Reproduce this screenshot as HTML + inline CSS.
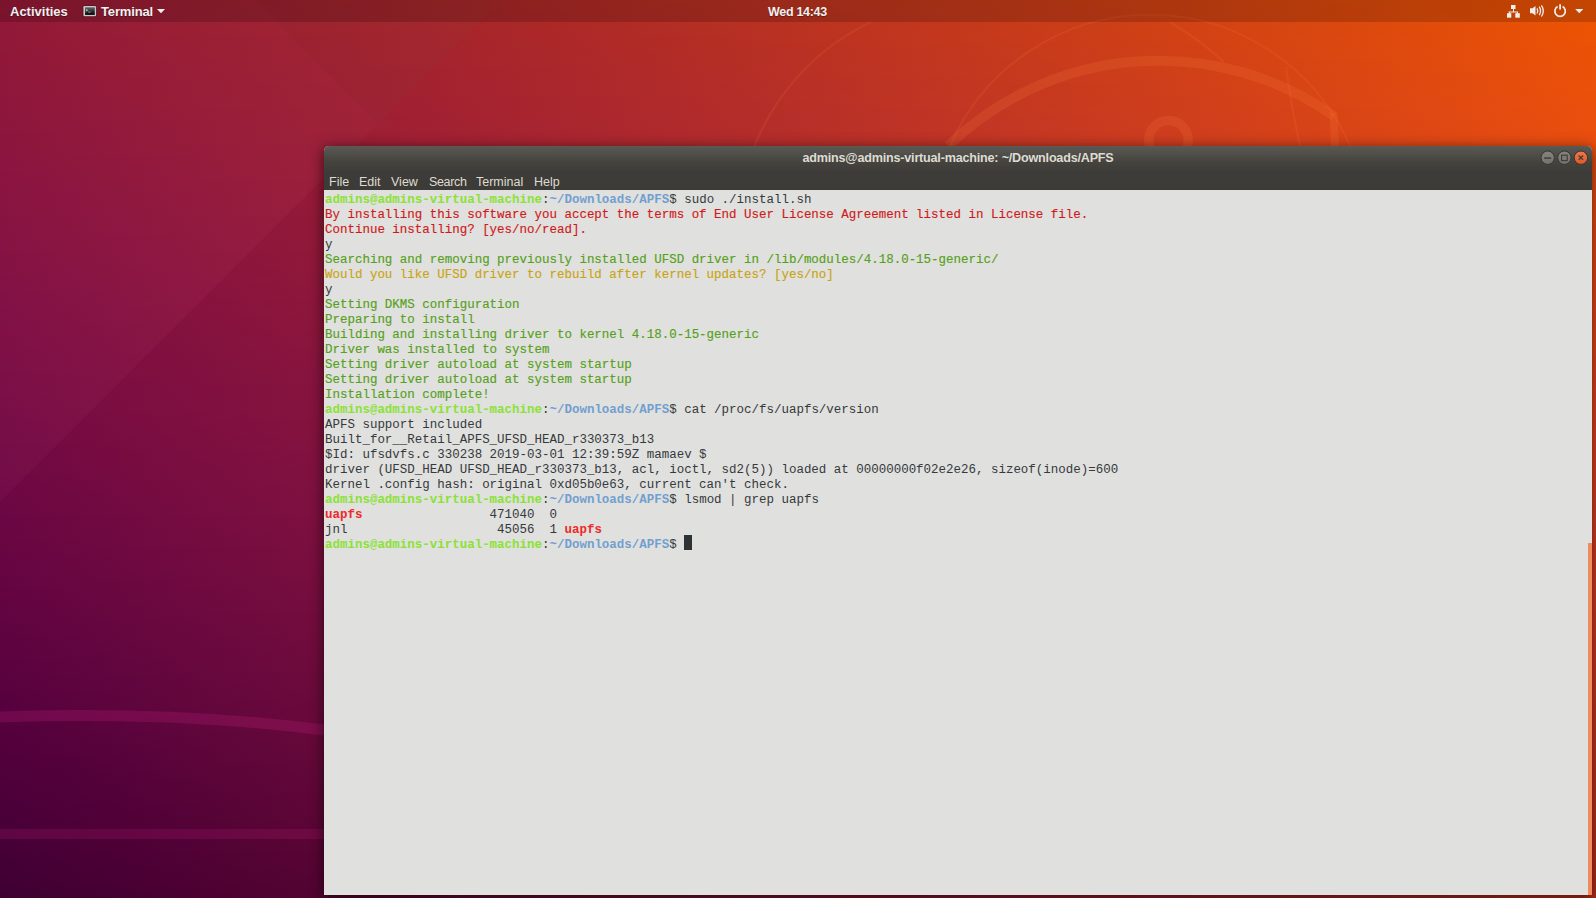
<!DOCTYPE html>
<html><head><meta charset="utf-8">
<style>
html,body{margin:0;padding:0;width:1596px;height:898px;overflow:hidden;}
body{position:relative;font-family:"Liberation Sans",sans-serif;background:#7a0a4a;}
#wall{position:absolute;left:0;top:0;width:1596px;height:898px;overflow:hidden;}
#wall div{position:absolute;left:0;width:1596px;height:6px;}
#deco{position:absolute;left:0;top:0;}
#topbar{position:absolute;left:0;top:0;width:1596px;height:22px;background:rgba(0,0,0,0.17);color:#f0f0f0;font-size:13px;font-weight:bold;}
#topbar .t{position:absolute;top:4px;white-space:nowrap;line-height:16px;text-shadow:0 1px 1px rgba(0,0,0,0.35);}
#ticons{position:absolute;left:0;top:0;}
#shadow{position:absolute;left:324px;top:146px;width:1268px;height:749px;border-radius:5px 5px 0 0;box-shadow:0 3px 14px 1px rgba(0,0,0,0.55);}
#win{position:absolute;left:324px;top:146px;width:1268px;height:749px;border-radius:5px 5px 0 0;overflow:hidden;background:#e0e0df;}
#title{position:absolute;left:0;top:0;width:1268px;height:44px;background:linear-gradient(#5a5953 0px,#4f4e49 8px,#44433e 16px,#3d3c38 26px,#3c3b37 44px);}
#title .tt{position:absolute;left:0;width:1268px;top:4px;line-height:16px;text-align:center;color:#dfdbd2;font-size:12.6px;font-weight:bold;letter-spacing:-0.2px;}
#menu{position:absolute;left:0;top:24px;height:20px;width:1268px;color:#dfdbd2;font-size:12.5px;}
#menu span{position:absolute;top:4px;line-height:16px;white-space:nowrap;}
#term{position:absolute;left:0;top:44px;width:1268px;height:705px;background:#e0e0df;}
pre{margin:0;position:absolute;left:1px;top:3px;font-family:"Liberation Mono",monospace;font-size:12.47px;line-height:15px;color:#35393b;}
.g{color:#8ae234;font-weight:bold}.b{color:#729fcf;font-weight:bold}.r{color:#d01a1a;-webkit-text-stroke:0.15px}.gr{color:#56a01a;-webkit-text-stroke:0.15px}.y{color:#c9a412;-webkit-text-stroke:0.15px}.br{color:#ef2929;font-weight:bold}
.cur{background:#2e3436;color:#e0e0df}
#sb{position:absolute;left:1264px;top:353px;width:5px;height:352px;background:#ee8c60;}
</style></head><body>
<div id="wall">
<div style="top:0px;background:linear-gradient(90deg,#901531 0px,#97192f 133px,#9e1e2c 266px,#a52329 399px,#ac2826 532px,#b32e23 665px,#bb331f 798px,#c2381a 931px,#ca3e16 1064px,#d24311 1197px,#db490c 1330px,#e34e07 1463px,#ec5401 1596px)"></div>
<div style="top:6px;background:linear-gradient(90deg,#901532 0px,#971930 133px,#9d1e2d 266px,#a4232a 399px,#ac2827 532px,#b32d23 665px,#ba331f 798px,#c2381b 931px,#ca3d17 1064px,#d24312 1197px,#db480d 1330px,#e34e07 1463px,#ec5402 1596px)"></div>
<div style="top:12px;background:linear-gradient(90deg,#901432 0px,#961930 133px,#9d1e2d 266px,#a4232a 399px,#ab2827 532px,#b32d24 665px,#ba3220 798px,#c2381c 931px,#ca3d17 1064px,#d24312 1197px,#db480d 1330px,#e34e08 1463px,#ec5402 1596px)"></div>
<div style="top:18px;background:linear-gradient(90deg,#901433 0px,#961931 133px,#9d1e2e 266px,#a4232b 399px,#ab2828 532px,#b32d24 665px,#ba3220 798px,#c2371c 931px,#ca3d18 1064px,#d24213 1197px,#db480e 1330px,#e34e09 1463px,#ec5303 1596px)"></div>
<div style="top:24px;background:linear-gradient(90deg,#8f1433 0px,#961931 133px,#9d1e2e 266px,#a4232b 399px,#ab2828 532px,#b22d25 665px,#ba3221 798px,#c2371d 931px,#ca3d18 1064px,#d24214 1197px,#da480f 1330px,#e34d09 1463px,#ec5304 1596px)"></div>
<div style="top:30px;background:linear-gradient(90deg,#8f1434 0px,#961931 133px,#9d1e2f 266px,#a4222c 399px,#ab2729 532px,#b22d25 665px,#ba3221 798px,#c2371d 931px,#ca3c19 1064px,#d24214 1197px,#da470f 1330px,#e34d0a 1463px,#ec5304 1596px)"></div>
<div style="top:36px;background:linear-gradient(90deg,#8f1434 0px,#951932 133px,#9c1d2f 266px,#a3222c 399px,#ab2729 532px,#b22c26 665px,#ba3222 798px,#c2371e 931px,#ca3c19 1064px,#d24215 1197px,#da4710 1330px,#e34d0b 1463px,#ec5305 1596px)"></div>
<div style="top:42px;background:linear-gradient(90deg,#8f1435 0px,#951832 133px,#9c1d30 266px,#a3222d 399px,#aa272a 532px,#b22c26 665px,#ba3122 798px,#c1371e 931px,#c93c1a 1064px,#d24115 1197px,#da4710 1330px,#e34d0b 1463px,#ec5206 1596px)"></div>
<div style="top:48px;background:linear-gradient(90deg,#8e1435 0px,#951833 133px,#9c1d30 266px,#a3222d 399px,#aa272a 532px,#b22c27 665px,#b93123 798px,#c1361f 931px,#c93c1b 1064px,#d24116 1197px,#da4711 1330px,#e34c0c 1463px,#ec5206 1596px)"></div>
<div style="top:54px;background:linear-gradient(90deg,#8e1336 0px,#951833 133px,#9c1d31 266px,#a3222e 399px,#aa272b 532px,#b12c27 665px,#b93124 798px,#c1361f 931px,#c93c1b 1064px,#d14116 1197px,#da4712 1330px,#e34c0c 1463px,#eb5207 1596px)"></div>
<div style="top:60px;background:linear-gradient(90deg,#8e1336 0px,#941834 133px,#9b1d31 266px,#a2222e 399px,#aa272b 532px,#b12c28 665px,#b93124 798px,#c13620 931px,#c93b1c 1064px,#d14117 1197px,#da4612 1330px,#e24c0d 1463px,#eb5207 1596px)"></div>
<div style="top:66px;background:linear-gradient(90deg,#8d1336 0px,#941834 133px,#9b1d32 266px,#a2212f 399px,#aa262c 532px,#b12b28 665px,#b93125 798px,#c13621 931px,#c93b1c 1064px,#d14118 1197px,#da4613 1330px,#e24c0d 1463px,#eb5108 1596px)"></div>
<div style="top:72px;background:linear-gradient(90deg,#8d1337 0px,#941835 133px,#9b1c32 266px,#a2212f 399px,#a9262c 532px,#b12b29 665px,#b93025 798px,#c13621 931px,#c93b1d 1064px,#d14018 1197px,#d94613 1330px,#e24b0e 1463px,#eb5108 1596px)"></div>
<div style="top:78px;background:linear-gradient(90deg,#8d1337 0px,#941735 133px,#9b1c33 266px,#a22130 399px,#a9262d 532px,#b12b29 665px,#b83026 798px,#c03522 931px,#c83b1d 1064px,#d14019 1197px,#d94614 1330px,#e24b0f 1463px,#eb5109 1596px)"></div>
<div style="top:84px;background:linear-gradient(90deg,#8d1338 0px,#931736 133px,#9a1c33 266px,#a22130 399px,#a9262d 532px,#b02b2a 665px,#b83026 798px,#c03522 931px,#c83a1e 1064px,#d14019 1197px,#d94514 1330px,#e24b0f 1463px,#eb510a 1596px)"></div>
<div style="top:90px;background:linear-gradient(90deg,#8c1338 0px,#931736 133px,#9a1c33 266px,#a12131 399px,#a9262e 532px,#b02b2a 665px,#b83027 798px,#c03523 931px,#c83a1e 1064px,#d0401a 1197px,#d94515 1330px,#e24b10 1463px,#eb500a 1596px)"></div>
<div style="top:96px;background:linear-gradient(90deg,#8c1239 0px,#931736 133px,#9a1c34 266px,#a12131 399px,#a8252e 532px,#b02a2b 665px,#b83027 798px,#c03523 931px,#c83a1f 1064px,#d03f1a 1197px,#d94515 1330px,#e24a10 1463px,#eb500b 1596px)"></div>
<div style="top:102px;background:linear-gradient(90deg,#8c1239 0px,#931737 133px,#9a1c34 266px,#a12032 399px,#a8252e 532px,#b02a2b 665px,#b82f27 798px,#c03524 931px,#c83a1f 1064px,#d03f1b 1197px,#d94516 1330px,#e24a11 1463px,#ea500b 1596px)"></div>
<div style="top:108px;background:linear-gradient(90deg,#8b1239 0px,#921737 133px,#991b35 266px,#a12032 399px,#a8252f 532px,#b02a2c 665px,#b72f28 798px,#bf3424 931px,#c83a20 1064px,#d03f1b 1197px,#d94416 1330px,#e14a11 1463px,#ea4f0c 1596px)"></div>
<div style="top:114px;background:linear-gradient(90deg,#8b123a 0px,#921738 133px,#991b35 266px,#a02032 399px,#a8252f 532px,#af2a2c 665px,#b72f28 798px,#bf3424 931px,#c73920 1064px,#d03f1c 1197px,#d84417 1330px,#e14a12 1463px,#ea4f0c 1596px)"></div>
<div style="top:120px;background:linear-gradient(90deg,#8b123a 0px,#921638 133px,#991b36 266px,#a02033 399px,#a72530 532px,#af2a2c 665px,#b72f29 798px,#bf3425 931px,#c73921 1064px,#d03e1c 1197px,#d84417 1330px,#e14912 1463px,#ea4f0d 1596px)"></div>
<div style="top:126px;background:linear-gradient(90deg,#8b123a 0px,#911638 133px,#991b36 266px,#a02033 399px,#a72530 532px,#af292d 665px,#b72f29 798px,#bf3425 931px,#c73921 1064px,#cf3e1d 1197px,#d84418 1330px,#e14913 1463px,#ea4f0d 1596px)"></div>
<div style="top:132px;background:linear-gradient(90deg,#8a113b 0px,#911639 133px,#981b36 266px,#9f1f34 399px,#a72431 532px,#af292d 665px,#b62e2a 798px,#bf3326 931px,#c73922 1064px,#cf3e1d 1197px,#d84318 1330px,#e14913 1463px,#ea4e0e 1596px)"></div>
<div style="top:138px;background:linear-gradient(90deg,#8a113b 0px,#911639 133px,#981b37 266px,#9f1f34 399px,#a72431 532px,#ae292e 665px,#b62e2a 798px,#be3326 931px,#c73822 1064px,#cf3e1e 1197px,#d84319 1330px,#e14914 1463px,#ea4e0e 1596px)"></div>
<div style="top:144px;background:linear-gradient(90deg,#8a113b 0px,#911639 133px,#981a37 266px,#9f1f34 399px,#a62431 532px,#ae292e 665px,#b62e2b 798px,#be3327 931px,#c63823 1064px,#cf3d1e 1197px,#d84319 1330px,#e04814 1463px,#e94e0f 1596px)"></div>
<div style="top:150px;background:linear-gradient(90deg,#89113c 0px,#90163a 133px,#971a37 266px,#9f1f35 399px,#a62432 532px,#ae292f 665px,#b62e2b 798px,#be3327 931px,#c63823 1064px,#cf3d1f 1197px,#d7431a 1330px,#e04815 1463px,#e94e0f 1596px)"></div>
<div style="top:156px;background:linear-gradient(90deg,#89113c 0px,#90153a 133px,#971a38 266px,#9e1f35 399px,#a62432 532px,#ae292f 665px,#b62d2b 798px,#be3328 931px,#c63823 1064px,#ce3d1f 1197px,#d7421a 1330px,#e04815 1463px,#e94d10 1596px)"></div>
<div style="top:162px;background:linear-gradient(90deg,#89113c 0px,#90153a 133px,#971a38 266px,#9e1f35 399px,#a62333 532px,#ad282f 665px,#b52d2c 798px,#bd3228 931px,#c63824 1064px,#ce3d1f 1197px,#d7421b 1330px,#e04816 1463px,#e94d10 1596px)"></div>
<div style="top:168px;background:linear-gradient(90deg,#88113d 0px,#8f153b 133px,#961a38 266px,#9e1e36 399px,#a52333 532px,#ad2830 665px,#b52d2c 798px,#bd3228 931px,#c53724 1064px,#ce3d20 1197px,#d7421b 1330px,#e04716 1463px,#e94d11 1596px)"></div>
<div style="top:174px;background:linear-gradient(90deg,#88103d 0px,#8f153b 133px,#961a39 266px,#9d1e36 399px,#a52333 532px,#ad2830 665px,#b52d2d 798px,#bd3229 931px,#c53725 1064px,#ce3c20 1197px,#d7421c 1330px,#df4717 1463px,#e94d11 1596px)"></div>
<div style="top:180px;background:linear-gradient(90deg,#88103d 0px,#8f153b 133px,#961939 266px,#9d1e37 399px,#a52334 532px,#ad2830 665px,#b42d2d 798px,#bd3229 931px,#c53725 1064px,#ce3c21 1197px,#d6411c 1330px,#df4717 1463px,#e84c12 1596px)"></div>
<div style="top:186px;background:linear-gradient(90deg,#87103e 0px,#8e153c 133px,#951939 266px,#9d1e37 399px,#a42334 532px,#ac2831 665px,#b42c2d 798px,#bc312a 931px,#c53726 1064px,#cd3c21 1197px,#d6411c 1330px,#df4718 1463px,#e84c12 1596px)"></div>
<div style="top:192px;background:linear-gradient(90deg,#87103e 0px,#8e143c 133px,#95193a 266px,#9d1e37 399px,#a42234 532px,#ac2731 665px,#b42c2e 798px,#bc312a 931px,#c53626 1064px,#cd3c22 1197px,#d6411d 1330px,#df4618 1463px,#e84c13 1596px)"></div>
<div style="top:198px;background:linear-gradient(90deg,#87103e 0px,#8e143c 133px,#95193a 266px,#9c1e38 399px,#a42235 532px,#ac2732 665px,#b42c2e 798px,#bc312a 931px,#c43626 1064px,#cd3b22 1197px,#d6411d 1330px,#df4618 1463px,#e84b13 1596px)"></div>
<div style="top:204px;background:linear-gradient(90deg,#86103f 0px,#8d143d 133px,#94193a 266px,#9c1d38 399px,#a42235 532px,#ab2732 665px,#b32c2e 798px,#bc312b 931px,#c43627 1064px,#cd3b22 1197px,#d5401e 1330px,#de4619 1463px,#e84b14 1596px)"></div>
<div style="top:210px;background:linear-gradient(90deg,#86103f 0px,#8d143d 133px,#94193b 266px,#9c1d38 399px,#a32235 532px,#ab2732 665px,#b32c2f 798px,#bb312b 931px,#c43627 1064px,#cc3b23 1197px,#d5401e 1330px,#de4519 1463px,#e74b14 1596px)"></div>
<div style="top:216px;background:linear-gradient(90deg,#850f3f 0px,#8c143d 133px,#94183b 266px,#9b1d38 399px,#a32236 532px,#ab2733 665px,#b32b2f 798px,#bb302b 931px,#c33527 1064px,#cc3b23 1197px,#d5401f 1330px,#de451a 1463px,#e74b14 1596px)"></div>
<div style="top:222px;background:linear-gradient(90deg,#850f3f 0px,#8c143d 133px,#93183b 266px,#9b1d39 399px,#a32236 532px,#aa2633 665px,#b32b30 798px,#bb302c 931px,#c33528 1064px,#cc3a24 1197px,#d5401f 1330px,#de451a 1463px,#e74a15 1596px)"></div>
<div style="top:228px;background:linear-gradient(90deg,#850f40 0px,#8c143e 133px,#93183c 266px,#9b1d39 399px,#a22136 532px,#aa2633 665px,#b22b30 798px,#ba302c 931px,#c33528 1064px,#cc3a24 1197px,#d43f1f 1330px,#de451a 1463px,#e74a15 1596px)"></div>
<div style="top:234px;background:linear-gradient(90deg,#840f40 0px,#8b133e 133px,#93183c 266px,#9a1c39 399px,#a22137 532px,#aa2634 665px,#b22b30 798px,#ba302d 931px,#c33529 1064px,#cb3a24 1197px,#d43f20 1330px,#dd441b 1463px,#e74a16 1596px)"></div>
<div style="top:240px;background:linear-gradient(90deg,#840f40 0px,#8b133e 133px,#92183c 266px,#9a1c3a 399px,#a22137 532px,#a92634 665px,#b22b30 798px,#ba2f2d 931px,#c23529 1064px,#cb3a25 1197px,#d43f20 1330px,#dd441b 1463px,#e64a16 1596px)"></div>
<div style="top:246px;background:linear-gradient(90deg,#840f40 0px,#8b133f 133px,#92183c 266px,#9a1c3a 399px,#a12137 532px,#a92534 665px,#b12a31 798px,#ba2f2d 931px,#c23429 1064px,#cb3925 1197px,#d43f20 1330px,#dd441c 1463px,#e64916 1596px)"></div>
<div style="top:252px;background:linear-gradient(90deg,#830e41 0px,#8a133f 133px,#92173d 266px,#991c3a 399px,#a12137 532px,#a92534 665px,#b12a31 798px,#b92f2d 931px,#c2342a 1064px,#cb3925 1197px,#d33e21 1330px,#dd441c 1463px,#e64917 1596px)"></div>
<div style="top:258px;background:linear-gradient(90deg,#830e41 0px,#8a133f 133px,#91173d 266px,#991c3a 399px,#a12038 532px,#a82535 665px,#b12a31 798px,#b92f2e 931px,#c2342a 1064px,#ca3926 1197px,#d33e21 1330px,#dc431c 1463px,#e64917 1596px)"></div>
<div style="top:264px;background:linear-gradient(90deg,#820e41 0px,#89133f 133px,#91173d 266px,#981c3b 399px,#a02038 532px,#a82535 665px,#b02a32 798px,#b92f2e 931px,#c1342a 1064px,#ca3926 1197px,#d33e22 1330px,#dc431d 1463px,#e54818 1596px)"></div>
<div style="top:270px;background:linear-gradient(90deg,#820e41 0px,#89123f 133px,#90173d 266px,#981b3b 399px,#a02038 532px,#a82535 665px,#b02932 798px,#b82e2e 931px,#c1332b 1064px,#ca3826 1197px,#d33e22 1330px,#dc431d 1463px,#e54818 1596px)"></div>
<div style="top:276px;background:linear-gradient(90deg,#810e41 0px,#891240 133px,#90173e 266px,#981b3b 399px,#9f2039 532px,#a72436 665px,#b02932 798px,#b82e2f 931px,#c1332b 1064px,#c93827 1197px,#d23d22 1330px,#dc431d 1463px,#e54818 1596px)"></div>
<div style="top:282px;background:linear-gradient(90deg,#810e42 0px,#881240 133px,#90163e 266px,#971b3b 399px,#9f2039 532px,#a72436 665px,#af2933 798px,#b82e2f 931px,#c0332b 1064px,#c93827 1197px,#d23d23 1330px,#db421e 1463px,#e54819 1596px)"></div>
<div style="top:288px;background:linear-gradient(90deg,#810e42 0px,#881240 133px,#8f163e 266px,#971b3c 399px,#9f1f39 532px,#a72436 665px,#af2933 798px,#b72e2f 931px,#c0332b 1064px,#c93827 1197px,#d23d23 1330px,#db421e 1463px,#e44719 1596px)"></div>
<div style="top:294px;background:linear-gradient(90deg,#800d42 0px,#871240 133px,#8f163e 266px,#971b3c 399px,#9e1f39 532px,#a62436 665px,#af2933 798px,#b72d30 931px,#c0322c 1064px,#c93728 1197px,#d23d23 1330px,#db421e 1463px,#e44719 1596px)"></div>
<div style="top:300px;background:linear-gradient(90deg,#800d42 0px,#871241 133px,#8e163e 266px,#961a3c 399px,#9e1f3a 532px,#a62437 665px,#ae2833 798px,#b72d30 931px,#bf322c 1064px,#c83728 1197px,#d13c23 1330px,#da421f 1463px,#e4471a 1596px)"></div>
<div style="top:306px;background:linear-gradient(90deg,#7f0d42 0px,#871141 133px,#8e163f 266px,#961a3c 399px,#9e1f3a 532px,#a62337 665px,#ae2834 798px,#b62d30 931px,#bf322c 1064px,#c83728 1197px,#d13c24 1330px,#da411f 1463px,#e4471a 1596px)"></div>
<div style="top:312px;background:linear-gradient(90deg,#7f0d43 0px,#861141 133px,#8e163f 266px,#951a3d 399px,#9d1f3a 532px,#a52337 665px,#ae2834 798px,#b62d30 931px,#bf322d 1064px,#c83728 1197px,#d13c24 1330px,#da411f 1463px,#e3461a 1596px)"></div>
<div style="top:318px;background:linear-gradient(90deg,#7e0d43 0px,#861141 133px,#8d153f 266px,#951a3d 399px,#9d1e3a 532px,#a52337 665px,#ad2834 798px,#b62d31 931px,#be312d 1064px,#c73629 1197px,#d03c24 1330px,#da4120 1463px,#e3461b 1596px)"></div>
<div style="top:324px;background:linear-gradient(90deg,#7e0d43 0px,#851141 133px,#8d153f 266px,#951a3d 399px,#9c1e3a 532px,#a52338 665px,#ad2834 798px,#b52c31 931px,#be312d 1064px,#c73629 1197px,#d03b25 1330px,#d94020 1463px,#e3461b 1596px)"></div>
<div style="top:330px;background:linear-gradient(90deg,#7e0c43 0px,#851141 133px,#8c153f 266px,#94193d 399px,#9c1e3b 532px,#a42338 665px,#ac2735 798px,#b52c31 931px,#be312d 1064px,#c73629 1197px,#d03b25 1330px,#d94020 1463px,#e3451b 1596px)"></div>
<div style="top:336px;background:linear-gradient(90deg,#7d0c43 0px,#841142 133px,#8c1540 266px,#94193d 399px,#9c1e3b 532px,#a42238 665px,#ac2735 798px,#b52c31 931px,#bd312e 1064px,#c6362a 1197px,#cf3b25 1330px,#d94021 1463px,#e2451c 1596px)"></div>
<div style="top:342px;background:linear-gradient(90deg,#7d0c43 0px,#841042 133px,#8c1540 266px,#93193e 399px,#9b1e3b 532px,#a32238 665px,#ac2735 798px,#b42c32 931px,#bd312e 1064px,#c6352a 1197px,#cf3b25 1330px,#d84021 1463px,#e2451c 1596px)"></div>
<div style="top:348px;background:linear-gradient(90deg,#7c0c43 0px,#841042 133px,#8b1540 266px,#93193e 399px,#9b1d3b 532px,#a32238 665px,#ab2735 798px,#b42b32 931px,#bd302e 1064px,#c6352a 1197px,#cf3a26 1330px,#d83f21 1463px,#e2451c 1596px)"></div>
<div style="top:354px;background:linear-gradient(90deg,#7c0c44 0px,#831042 133px,#8b1440 266px,#92193e 399px,#9a1d3b 532px,#a32239 665px,#ab2635 798px,#b42b32 931px,#bc302e 1064px,#c5352a 1197px,#ce3a26 1330px,#d83f21 1463px,#e1441c 1596px)"></div>
<div style="top:360px;background:linear-gradient(90deg,#7b0c44 0px,#831042 133px,#8a1440 266px,#92193e 399px,#9a1d3c 532px,#a22239 665px,#ab2636 798px,#b32b32 931px,#bc302f 1064px,#c5352b 1197px,#ce3a26 1330px,#d73f22 1463px,#e1441d 1596px)"></div>
<div style="top:366px;background:linear-gradient(90deg,#7b0c44 0px,#821042 133px,#8a1440 266px,#92183e 399px,#9a1d3c 532px,#a22139 665px,#aa2636 798px,#b32b32 931px,#bc302f 1064px,#c5342b 1197px,#ce3926 1330px,#d73f22 1463px,#e1441d 1596px)"></div>
<div style="top:372px;background:linear-gradient(90deg,#7a0b44 0px,#821042 133px,#891440 266px,#91183e 399px,#991d3c 532px,#a12139 665px,#aa2636 798px,#b22b33 931px,#bb2f2f 1064px,#c4342b 1197px,#cd3927 1330px,#d73e22 1463px,#e0431d 1596px)"></div>
<div style="top:378px;background:linear-gradient(90deg,#7a0b44 0px,#810f42 133px,#891441 266px,#91183e 399px,#991c3c 532px,#a12139 665px,#a92636 798px,#b22a33 931px,#bb2f2f 1064px,#c4342b 1197px,#cd3927 1330px,#d63e22 1463px,#e0431e 1596px)"></div>
<div style="top:384px;background:linear-gradient(90deg,#790b44 0px,#810f43 133px,#881341 266px,#90183f 399px,#981c3c 532px,#a12139 665px,#a92536 798px,#b22a33 931px,#ba2f2f 1064px,#c3342b 1197px,#cd3927 1330px,#d63e23 1463px,#e0431e 1596px)"></div>
<div style="top:390px;background:linear-gradient(90deg,#790b44 0px,#800f43 133px,#881341 266px,#90183f 399px,#981c3c 532px,#a0213a 665px,#a92536 798px,#b12a33 931px,#ba2f30 1064px,#c3332c 1197px,#cc3827 1330px,#d63e23 1463px,#df431e 1596px)"></div>
<div style="top:396px;background:linear-gradient(90deg,#780b44 0px,#800f43 133px,#871341 266px,#8f173f 399px,#971c3c 532px,#a0203a 665px,#a82537 798px,#b12a33 931px,#ba2e30 1064px,#c3332c 1197px,#cc3828 1330px,#d53d23 1463px,#df421e 1596px)"></div>
<div style="top:402px;background:linear-gradient(90deg,#780b44 0px,#7f0f43 133px,#871341 266px,#8f173f 399px,#971c3d 532px,#9f203a 665px,#a82537 798px,#b02933 931px,#b92e30 1064px,#c2332c 1197px,#cc3828 1330px,#d53d23 1463px,#df421e 1596px)"></div>
<div style="top:408px;background:linear-gradient(90deg,#770a44 0px,#7f0f43 133px,#871341 266px,#8e173f 399px,#971b3d 532px,#9f203a 665px,#a72437 798px,#b02934 931px,#b92e30 1064px,#c2332c 1197px,#cb3828 1330px,#d53d23 1463px,#de421f 1596px)"></div>
<div style="top:414px;background:linear-gradient(90deg,#770a44 0px,#7e0e43 133px,#861341 266px,#8e173f 399px,#961b3d 532px,#9e203a 665px,#a72437 798px,#b02934 931px,#b82e30 1064px,#c2322c 1197px,#cb3728 1330px,#d43c24 1463px,#de421f 1596px)"></div>
<div style="top:420px;background:linear-gradient(90deg,#760a45 0px,#7e0e43 133px,#861241 266px,#8d173f 399px,#961b3d 532px,#9e1f3a 665px,#a62437 798px,#af2934 931px,#b82d30 1064px,#c1322d 1197px,#ca3728 1330px,#d43c24 1463px,#de411f 1596px)"></div>
<div style="top:426px;background:linear-gradient(90deg,#760a45 0px,#7d0e43 133px,#851241 266px,#8d163f 399px,#951b3d 532px,#9d1f3a 665px,#a62437 798px,#af2834 931px,#b82d31 1064px,#c1322d 1197px,#ca3729 1330px,#d43c24 1463px,#dd411f 1596px)"></div>
<div style="top:432px;background:linear-gradient(90deg,#750a45 0px,#7d0e43 133px,#851241 266px,#8d163f 399px,#951b3d 532px,#9d1f3a 665px,#a62437 798px,#ae2834 931px,#b72d31 1064px,#c0322d 1197px,#ca3729 1330px,#d33c24 1463px,#dd4120 1596px)"></div>
<div style="top:438px;background:linear-gradient(90deg,#750a45 0px,#7c0e43 133px,#841241 266px,#8c163f 399px,#941a3d 532px,#9d1f3a 665px,#a52338 798px,#ae2834 931px,#b72d31 1064px,#c0312d 1197px,#c93629 1330px,#d33b24 1463px,#dd4020 1596px)"></div>
<div style="top:444px;background:linear-gradient(90deg,#740945 0px,#7c0d43 133px,#841242 266px,#8c1640 399px,#941a3d 532px,#9c1f3b 665px,#a52338 798px,#ad2834 931px,#b62c31 1064px,#c0312d 1197px,#c93629 1330px,#d23b25 1463px,#dc4020 1596px)"></div>
<div style="top:450px;background:linear-gradient(90deg,#740945 0px,#7b0d43 133px,#831142 266px,#8b1640 399px,#931a3d 532px,#9c1e3b 665px,#a42338 798px,#ad2835 931px,#b62c31 1064px,#bf312d 1197px,#c93629 1330px,#d23b25 1463px,#dc4020 1596px)"></div>
<div style="top:456px;background:linear-gradient(90deg,#730945 0px,#7b0d43 133px,#831142 266px,#8b1540 399px,#931a3d 532px,#9b1e3b 665px,#a42338 798px,#ad2735 931px,#b62c31 1064px,#bf312d 1197px,#c83629 1330px,#d23b25 1463px,#db4020 1596px)"></div>
<div style="top:462px;background:linear-gradient(90deg,#730945 0px,#7a0d43 133px,#821142 266px,#8a1540 399px,#921a3d 532px,#9b1e3b 665px,#a32238 798px,#ac2735 931px,#b52c31 1064px,#be302e 1197px,#c83529 1330px,#d13a25 1463px,#db3f20 1596px)"></div>
<div style="top:468px;background:linear-gradient(90deg,#720945 0px,#7a0d43 133px,#811142 266px,#8a1540 399px,#92193d 532px,#9a1e3b 665px,#a32238 798px,#ac2735 931px,#b52b31 1064px,#be302e 1197px,#c7352a 1330px,#d13a25 1463px,#db3f21 1596px)"></div>
<div style="top:474px;background:linear-gradient(90deg,#710945 0px,#790d43 133px,#811142 266px,#891540 399px,#91193e 532px,#9a1e3b 665px,#a22238 798px,#ab2735 931px,#b42b32 1064px,#bd302e 1197px,#c7352a 1330px,#d13a25 1463px,#da3f21 1596px)"></div>
<div style="top:480px;background:linear-gradient(90deg,#710845 0px,#790c43 133px,#801142 266px,#891540 399px,#91193e 532px,#991d3b 665px,#a22238 798px,#ab2635 931px,#b42b32 1064px,#bd302e 1197px,#c6352a 1330px,#d03926 1463px,#da3e21 1596px)"></div>
<div style="top:486px;background:linear-gradient(90deg,#700845 0px,#780c43 133px,#801042 266px,#881540 399px,#90193e 532px,#991d3b 665px,#a12238 798px,#aa2635 931px,#b32b32 1064px,#bd2f2e 1197px,#c6342a 1330px,#d03926 1463px,#da3e21 1596px)"></div>
<div style="top:492px;background:linear-gradient(90deg,#700845 0px,#770c43 133px,#7f1042 266px,#871440 399px,#90193e 532px,#981d3b 665px,#a12138 798px,#aa2635 931px,#b32a32 1064px,#bc2f2e 1197px,#c6342a 1330px,#cf3926 1463px,#d93e21 1596px)"></div>
<div style="top:498px;background:linear-gradient(90deg,#6f0845 0px,#770c43 133px,#7f1042 266px,#871440 399px,#8f183e 532px,#981d3b 665px,#a02138 798px,#a92635 931px,#b22a32 1064px,#bc2f2e 1197px,#c5342a 1330px,#cf3926 1463px,#d93e21 1596px)"></div>
<div style="top:504px;background:linear-gradient(90deg,#6f0845 0px,#760c43 133px,#7e1042 266px,#861440 399px,#8f183e 532px,#971c3b 665px,#a02138 798px,#a92535 931px,#b22a32 1064px,#bb2f2e 1197px,#c5332a 1330px,#ce3826 1463px,#d83d21 1596px)"></div>
<div style="top:510px;background:linear-gradient(90deg,#6e0845 0px,#760c43 133px,#7e1042 266px,#861440 399px,#8e183e 532px,#971c3b 665px,#9f2138 798px,#a82535 931px,#b12a32 1064px,#bb2e2e 1197px,#c4332a 1330px,#ce3826 1463px,#d83d22 1596px)"></div>
<div style="top:516px;background:linear-gradient(90deg,#6d0745 0px,#750b43 133px,#7d0f42 266px,#851440 399px,#8e183e 532px,#961c3b 665px,#9f2038 798px,#a82535 931px,#b12a32 1064px,#ba2e2e 1197px,#c4332a 1330px,#ce3826 1463px,#d83d22 1596px)"></div>
<div style="top:522px;background:linear-gradient(90deg,#6d0744 0px,#750b43 133px,#7d0f42 266px,#851340 399px,#8d183e 532px,#961c3b 665px,#9e2038 798px,#a72535 931px,#b12932 1064px,#ba2e2e 1197px,#c3332b 1330px,#cd3726 1463px,#d73c22 1596px)"></div>
<div style="top:528px;background:linear-gradient(90deg,#6c0744 0px,#740b43 133px,#7c0f42 266px,#841340 399px,#8d173e 532px,#951c3b 665px,#9e2038 798px,#a72435 931px,#b02932 1064px,#b92e2e 1197px,#c3322b 1330px,#cd3726 1463px,#d73c22 1596px)"></div>
<div style="top:534px;background:linear-gradient(90deg,#6c0744 0px,#740b43 133px,#7b0f42 266px,#841340 399px,#8c173e 532px,#951b3b 665px,#9d2039 798px,#a62435 931px,#b02932 1064px,#b92d2f 1197px,#c3322b 1330px,#cc3726 1463px,#d63c22 1596px)"></div>
<div style="top:540px;background:linear-gradient(90deg,#6b0744 0px,#730b43 133px,#7b0f42 266px,#831340 399px,#8c173e 532px,#941b3b 665px,#9d2039 798px,#a62436 931px,#af2932 1064px,#b82d2f 1197px,#c2322b 1330px,#cc3726 1463px,#d63c22 1596px)"></div>
<div style="top:546px;background:linear-gradient(90deg,#6b0744 0px,#720a43 133px,#7a0e41 266px,#831340 399px,#8b173e 532px,#941b3b 665px,#9c1f39 798px,#a52436 931px,#af2832 1064px,#b82d2f 1197px,#c2322b 1330px,#cb3627 1463px,#d53b22 1596px)"></div>
<div style="top:552px;background:linear-gradient(90deg,#6a0644 0px,#720a43 133px,#7a0e41 266px,#821240 399px,#8a173e 532px,#931b3b 665px,#9c1f38 798px,#a52436 931px,#ae2832 1064px,#b82d2f 1197px,#c1312b 1330px,#cb3627 1463px,#d53b22 1596px)"></div>
<div style="top:558px;background:linear-gradient(90deg,#690644 0px,#710a43 133px,#790e41 266px,#811240 399px,#8a163e 532px,#931b3b 665px,#9b1f38 798px,#a42336 931px,#ae2832 1064px,#b72c2f 1197px,#c1312b 1330px,#ca3627 1463px,#d43b22 1596px)"></div>
<div style="top:564px;background:linear-gradient(90deg,#690644 0px,#710a43 133px,#790e41 266px,#811240 399px,#89163d 532px,#921a3b 665px,#9b1f38 798px,#a42336 931px,#ad2832 1064px,#b72c2f 1197px,#c0312b 1330px,#ca3627 1463px,#d43a22 1596px)"></div>
<div style="top:570px;background:linear-gradient(90deg,#680644 0px,#700a43 133px,#780e41 266px,#80123f 399px,#89163d 532px,#911a3b 665px,#9a1e38 798px,#a32335 931px,#ad2732 1064px,#b62c2f 1197px,#c0312b 1330px,#ca3527 1463px,#d43a22 1596px)"></div>
<div style="top:576px;background:linear-gradient(90deg,#670644 0px,#6f0a43 133px,#770e41 266px,#80123f 399px,#88163d 532px,#911a3b 665px,#9a1e38 798px,#a32335 931px,#ac2732 1064px,#b62c2f 1197px,#bf302b 1330px,#c93527 1463px,#d33a22 1596px)"></div>
<div style="top:582px;background:linear-gradient(90deg,#670644 0px,#6f0942 133px,#770d41 266px,#7f113f 399px,#88153d 532px,#901a3b 665px,#991e38 798px,#a22235 931px,#ac2732 1064px,#b52b2f 1197px,#bf302b 1330px,#c93527 1463px,#d33a22 1596px)"></div>
<div style="top:588px;background:linear-gradient(90deg,#660543 0px,#6e0942 133px,#760d41 266px,#7f113f 399px,#87153d 532px,#90193b 665px,#991e38 798px,#a22235 931px,#ab2732 1064px,#b52b2f 1197px,#be302b 1330px,#c83427 1463px,#d23922 1596px)"></div>
<div style="top:594px;background:linear-gradient(90deg,#660543 0px,#6d0942 133px,#760d41 266px,#7e113f 399px,#86153d 532px,#8f193b 665px,#981d38 798px,#a12235 931px,#ab2632 1064px,#b42b2f 1197px,#be2f2b 1330px,#c83427 1463px,#d23922 1596px)"></div>
<div style="top:600px;background:linear-gradient(90deg,#650543 0px,#6d0942 133px,#750d41 266px,#7d113f 399px,#86153d 532px,#8f193b 665px,#981d38 798px,#a12235 931px,#aa2632 1064px,#b32b2f 1197px,#bd2f2b 1330px,#c73427 1463px,#d13922 1596px)"></div>
<div style="top:606px;background:linear-gradient(90deg,#640543 0px,#6c0942 133px,#740d41 266px,#7d113f 399px,#85153d 532px,#8e193b 665px,#971d38 798px,#a02135 931px,#a92632 1064px,#b32a2f 1197px,#bd2f2b 1330px,#c73427 1463px,#d13822 1596px)"></div>
<div style="top:612px;background:linear-gradient(90deg,#640543 0px,#6c0942 133px,#740c40 266px,#7c103f 399px,#85143d 532px,#8d193b 665px,#961d38 798px,#a02135 931px,#a92632 1064px,#b22a2f 1197px,#bc2f2b 1330px,#c63327 1463px,#d03822 1596px)"></div>
<div style="top:618px;background:linear-gradient(90deg,#630543 0px,#6b0842 133px,#730c40 266px,#7c103f 399px,#84143d 532px,#8d183b 665px,#961d38 798px,#9f2135 931px,#a82532 1064px,#b22a2f 1197px,#bc2e2b 1330px,#c63327 1463px,#d03822 1596px)"></div>
<div style="top:624px;background:linear-gradient(90deg,#620443 0px,#6a0842 133px,#720c40 266px,#7b103f 399px,#83143d 532px,#8c183a 665px,#951c38 798px,#9e2135 931px,#a82532 1064px,#b1292f 1197px,#bb2e2b 1330px,#c53327 1463px,#cf3722 1596px)"></div>
<div style="top:630px;background:linear-gradient(90deg,#620442 0px,#6a0841 133px,#720c40 266px,#7a103e 399px,#83143d 532px,#8c183a 665px,#951c38 798px,#9e2035 931px,#a72532 1064px,#b1292e 1197px,#bb2e2b 1330px,#c53227 1463px,#cf3722 1596px)"></div>
<div style="top:636px;background:linear-gradient(90deg,#610442 0px,#690841 133px,#710c40 266px,#7a103e 399px,#82143c 532px,#8b183a 665px,#941c38 798px,#9d2035 931px,#a72532 1064px,#b0292e 1197px,#ba2e2b 1330px,#c43227 1463px,#ce3722 1596px)"></div>
<div style="top:642px;background:linear-gradient(90deg,#600442 0px,#680841 133px,#710b40 266px,#790f3e 399px,#82133c 532px,#8a173a 665px,#941c38 798px,#9d2035 931px,#a62432 1064px,#b0292e 1197px,#ba2d2b 1330px,#c43227 1463px,#ce3722 1596px)"></div>
<div style="top:648px;background:linear-gradient(90deg,#600442 0px,#680741 133px,#700b40 266px,#780f3e 399px,#81133c 532px,#8a173a 665px,#931b38 798px,#9c2035 931px,#a62432 1064px,#af282e 1197px,#b92d2b 1330px,#c33227 1463px,#cd3622 1596px)"></div>
<div style="top:654px;background:linear-gradient(90deg,#5f0442 0px,#670741 133px,#6f0b3f 266px,#780f3e 399px,#80133c 532px,#89173a 665px,#921b37 798px,#9c1f35 931px,#a52432 1064px,#af282e 1197px,#b92d2b 1330px,#c33127 1463px,#cd3622 1596px)"></div>
<div style="top:660px;background:linear-gradient(90deg,#5e0341 0px,#660741 133px,#6f0b3f 266px,#770f3e 399px,#80133c 532px,#89173a 665px,#921b37 798px,#9b1f35 931px,#a42331 1064px,#ae282e 1197px,#b82c2a 1330px,#c23127 1463px,#cc3622 1596px)"></div>
<div style="top:666px;background:linear-gradient(90deg,#5e0341 0px,#660740 133px,#6e0b3f 266px,#760f3e 399px,#7f123c 532px,#88173a 665px,#911b37 798px,#9a1f34 931px,#a42331 1064px,#ae282e 1197px,#b72c2a 1330px,#c13126 1463px,#cc3522 1596px)"></div>
<div style="top:672px;background:linear-gradient(90deg,#5d0341 0px,#650740 133px,#6d0a3f 266px,#760e3d 399px,#7f123c 532px,#871639 665px,#911a37 798px,#9a1f34 931px,#a32331 1064px,#ad272e 1197px,#b72c2a 1330px,#c13026 1463px,#cb3522 1596px)"></div>
<div style="top:678px;background:linear-gradient(90deg,#5c0341 0px,#640640 133px,#6d0a3f 266px,#750e3d 399px,#7e123b 532px,#871639 665px,#901a37 798px,#991e34 931px,#a32331 1064px,#ac272e 1197px,#b62c2a 1330px,#c03026 1463px,#cb3522 1596px)"></div>
<div style="top:684px;background:linear-gradient(90deg,#5c0341 0px,#640640 133px,#6c0a3f 266px,#750e3d 399px,#7d123b 532px,#861639 665px,#8f1a37 798px,#991e34 931px,#a22231 1064px,#ac272e 1197px,#b62b2a 1330px,#c03026 1463px,#ca3522 1596px)"></div>
<div style="top:690px;background:linear-gradient(90deg,#5b0240 0px,#63063f 133px,#6b0a3e 266px,#740e3d 399px,#7d123b 532px,#861639 665px,#8f1a37 798px,#981e34 931px,#a22231 1064px,#ab272e 1197px,#b52b2a 1330px,#bf3026 1463px,#ca3422 1596px)"></div>
<div style="top:696px;background:linear-gradient(90deg,#5a0240 0px,#62063f 133px,#6b0a3e 266px,#730d3d 399px,#7c113b 532px,#851539 665px,#8e1936 798px,#971e34 931px,#a12231 1064px,#ab262d 1197px,#b52b2a 1330px,#bf2f26 1463px,#c93422 1596px)"></div>
<div style="top:702px;background:linear-gradient(90deg,#590240 0px,#62063f 133px,#6a093e 266px,#730d3c 399px,#7b113b 532px,#841539 665px,#8d1936 798px,#971d34 931px,#a02231 1064px,#aa262d 1197px,#b42a2a 1330px,#be2f26 1463px,#c93422 1596px)"></div>
<div style="top:708px;background:linear-gradient(90deg,#590240 0px,#61063f 133px,#69093e 266px,#720d3c 399px,#7b113a 532px,#841538 665px,#8d1936 798px,#961d33 931px,#a02130 1064px,#a9262d 1197px,#b32a2a 1330px,#be2f26 1463px,#c83322 1596px)"></div>
<div style="top:714px;background:linear-gradient(90deg,#58023f 0px,#60053f 133px,#69093d 266px,#710d3c 399px,#7a113a 532px,#831538 665px,#8c1936 798px,#961d33 931px,#9f2130 1064px,#a9262d 1197px,#b32a2a 1330px,#bd2e26 1463px,#c73322 1596px)"></div>
<div style="top:720px;background:linear-gradient(90deg,#57023f 0px,#5f053e 133px,#68093d 266px,#700d3c 399px,#79113a 532px,#821438 665px,#8b1936 798px,#951d33 931px,#9e2130 1064px,#a8252d 1197px,#b22a29 1330px,#bc2e26 1463px,#c73321 1596px)"></div>
<div style="top:726px;background:linear-gradient(90deg,#57013f 0px,#5f053e 133px,#67093d 266px,#700c3c 399px,#79103a 532px,#821438 665px,#8b1835 798px,#941c33 931px,#9e2130 1064px,#a8252d 1197px,#b22929 1330px,#bc2e25 1463px,#c63221 1596px)"></div>
<div style="top:732px;background:linear-gradient(90deg,#56013f 0px,#5e053e 133px,#66083d 266px,#6f0c3b 399px,#78103a 532px,#811438 665px,#8a1835 798px,#941c33 931px,#9d2030 1064px,#a7252d 1197px,#b12929 1330px,#bb2e25 1463px,#c63221 1596px)"></div>
<div style="top:738px;background:linear-gradient(90deg,#55013e 0px,#5d053e 133px,#66083c 266px,#6e0c3b 399px,#771039 532px,#801437 665px,#8a1835 798px,#931c33 931px,#9d2030 1064px,#a6242c 1197px,#b02929 1330px,#bb2d25 1463px,#c53221 1596px)"></div>
<div style="top:744px;background:linear-gradient(90deg,#54013e 0px,#5d043d 133px,#65083c 266px,#6e0c3b 399px,#771039 532px,#801437 665px,#891835 798px,#921c32 931px,#9c202f 1064px,#a6242c 1197px,#b02929 1330px,#ba2d25 1463px,#c53221 1596px)"></div>
<div style="top:750px;background:linear-gradient(90deg,#54013e 0px,#5c043d 133px,#64083c 266px,#6d0c3b 399px,#760f39 532px,#7f1337 665px,#881735 798px,#921b32 931px,#9b202f 1064px,#a5242c 1197px,#af2829 1330px,#ba2d25 1463px,#c43121 1596px)"></div>
<div style="top:756px;background:linear-gradient(90deg,#53003d 0px,#5b043d 133px,#64083c 266px,#6c0b3a 399px,#750f39 532px,#7e1337 665px,#881734 798px,#911b32 931px,#9b1f2f 1064px,#a5242c 1197px,#af2828 1330px,#b92c25 1463px,#c33121 1596px)"></div>
<div style="top:762px;background:linear-gradient(90deg,#52003d 0px,#5a043c 133px,#63073b 266px,#6c0b3a 399px,#740f38 532px,#7e1336 665px,#871734 798px,#901b32 931px,#9a1f2f 1064px,#a4232c 1197px,#ae2828 1330px,#b82c25 1463px,#c33121 1596px)"></div>
<div style="top:768px;background:linear-gradient(90deg,#51003d 0px,#5a043c 133px,#62073b 266px,#6b0b3a 399px,#740f38 532px,#7d1336 665px,#861734 798px,#901b31 931px,#991f2f 1064px,#a3232c 1197px,#ad2728 1330px,#b82c24 1463px,#c23020 1596px)"></div>
<div style="top:774px;background:linear-gradient(90deg,#51003c 0px,#59033c 133px,#61073b 266px,#6a0b39 399px,#730f38 532px,#7c1236 665px,#861634 798px,#8f1a31 931px,#991f2e 1064px,#a3232b 1197px,#ad2728 1330px,#b72c24 1463px,#c23020 1596px)"></div>
<div style="top:780px;background:linear-gradient(90deg,#50003c 0px,#58033b 133px,#61073a 266px,#690b39 399px,#720e38 532px,#7c1236 665px,#851633 798px,#8e1a31 931px,#981e2e 1064px,#a2232b 1197px,#ac2728 1330px,#b72b24 1463px,#c13020 1596px)"></div>
<div style="top:786px;background:linear-gradient(90deg,#4f003c 0px,#57033b 133px,#60073a 266px,#690a39 399px,#720e37 532px,#7b1235 665px,#841633 798px,#8e1a31 931px,#971e2e 1064px,#a1222b 1197px,#ac2728 1330px,#b62b24 1463px,#c02f20 1596px)"></div>
<div style="top:792px;background:linear-gradient(90deg,#4e003b 0px,#57033b 133px,#5f063a 266px,#680a39 399px,#710e37 532px,#7a1235 665px,#831633 798px,#8d1a30 931px,#971e2e 1064px,#a1222b 1197px,#ab2627 1330px,#b52b24 1463px,#c02f20 1596px)"></div>
<div style="top:798px;background:linear-gradient(90deg,#4d003b 0px,#56033a 133px,#5e0639 266px,#670a38 399px,#700e37 532px,#791135 665px,#831533 798px,#8c1930 931px,#961e2d 1064px,#a0222a 1197px,#aa2627 1330px,#b52a23 1463px,#bf2f1f 1596px)"></div>
<div style="top:804px;background:linear-gradient(90deg,#4d003b 0px,#55023a 133px,#5e0639 266px,#660a38 399px,#6f0d36 532px,#791135 665px,#821532 798px,#8c1930 931px,#951d2d 1064px,#9f212a 1197px,#aa2627 1330px,#b42a23 1463px,#bf2f1f 1596px)"></div>
<div style="top:810px;background:linear-gradient(90deg,#4c003a 0px,#54023a 133px,#5d0639 266px,#660938 399px,#6f0d36 532px,#781134 665px,#811532 798px,#8b1930 931px,#951d2d 1064px,#9f212a 1197px,#a92527 1330px,#b32a23 1463px,#be2e1f 1596px)"></div>
<div style="top:816px;background:linear-gradient(90deg,#4b003a 0px,#540239 133px,#5c0638 266px,#650937 399px,#6e0d36 532px,#771134 665px,#811532 798px,#8a192f 931px,#941d2d 1064px,#9e212a 1197px,#a82526 1330px,#b32a23 1463px,#bd2e1f 1596px)"></div>
<div style="top:822px;background:linear-gradient(90deg,#4a003a 0px,#530239 133px,#5b0538 266px,#640937 399px,#6d0d35 532px,#771134 665px,#801432 798px,#8a182f 931px,#931c2c 1064px,#9d2129 1197px,#a82526 1330px,#b22923 1463px,#bd2e1f 1596px)"></div>
<div style="top:828px;background:linear-gradient(90deg,#4a0039 0px,#520239 133px,#5b0538 266px,#630937 399px,#6d0d35 532px,#761033 665px,#7f1431 798px,#89182f 931px,#931c2c 1064px,#9d2029 1197px,#a72526 1330px,#b12922 1463px,#bc2d1e 1596px)"></div>
<div style="top:834px;background:linear-gradient(90deg,#490039 0px,#510238 133px,#5a0537 266px,#630936 399px,#6c0c35 532px,#751033 665px,#7f1431 798px,#88182f 931px,#921c2c 1064px,#9c2029 1197px,#a62426 1330px,#b12922 1463px,#bb2d1e 1596px)"></div>
<div style="top:840px;background:linear-gradient(90deg,#480039 0px,#500138 133px,#590537 266px,#620836 399px,#6b0c34 532px,#741033 665px,#7e1431 798px,#87182e 931px,#911c2c 1064px,#9b2029 1197px,#a62425 1330px,#b02822 1463px,#bb2d1e 1596px)"></div>
<div style="top:846px;background:linear-gradient(90deg,#470038 0px,#500138 133px,#580537 266px,#610836 399px,#6a0c34 532px,#741032 665px,#7d1330 798px,#87172e 931px,#911b2b 1064px,#9b2028 1197px,#a52425 1330px,#af2822 1463px,#ba2c1e 1596px)"></div>
<div style="top:852px;background:linear-gradient(90deg,#460038 0px,#4f0137 133px,#580436 266px,#600835 399px,#6a0c34 532px,#730f32 665px,#7c1330 798px,#86172e 931px,#901b2b 1064px,#9a1f28 1197px,#a42325 1330px,#af2821 1463px,#ba2c1d 1596px)"></div>
<div style="top:858px;background:linear-gradient(90deg,#450037 0px,#4e0137 133px,#570436 266px,#600835 399px,#690b33 532px,#720f32 665px,#7c1330 798px,#85172d 931px,#8f1b2b 1064px,#991f28 1197px,#a42325 1330px,#ae2721 1463px,#b92c1d 1596px)"></div>
<div style="top:864px;background:linear-gradient(90deg,#450037 0px,#4d0136 133px,#560436 266px,#5f0834 399px,#680b33 532px,#710f31 665px,#7b132f 798px,#85172d 931px,#8f1b2a 1064px,#991f27 1197px,#a32324 1330px,#ad2721 1463px,#b82c1d 1596px)"></div>
<div style="top:870px;background:linear-gradient(90deg,#440036 0px,#4c0036 133px,#550435 266px,#5e0734 399px,#670b33 532px,#710f31 665px,#7a122f 798px,#84162d 931px,#8e1a2a 1064px,#981e27 1197px,#a22324 1330px,#ad2720 1463px,#b82b1d 1596px)"></div>
<div style="top:876px;background:linear-gradient(90deg,#430036 0px,#4c0036 133px,#540435 266px,#5d0734 399px,#660b32 532px,#700e31 665px,#79122f 798px,#83162c 931px,#8d1a2a 1064px,#971e27 1197px,#a22224 1330px,#ac2720 1463px,#b72b1c 1596px)"></div>
<div style="top:882px;background:linear-gradient(90deg,#420036 0px,#4b0035 133px,#540334 266px,#5c0733 399px,#660b32 532px,#6f0e30 665px,#79122e 798px,#82162c 931px,#8c1a29 1064px,#971e27 1197px,#a12223 1330px,#ab2620 1463px,#b62b1c 1596px)"></div>
<div style="top:888px;background:linear-gradient(90deg,#410035 0px,#4a0035 133px,#530334 266px,#5c0733 399px,#650a32 532px,#6e0e30 665px,#78122e 798px,#82162c 931px,#8c1a29 1064px,#961e26 1197px,#a02223 1330px,#ab2620 1463px,#b62a1c 1596px)"></div>
<div style="top:894px;background:linear-gradient(90deg,#400035 0px,#490034 133px,#520334 266px,#5b0632 399px,#640a31 532px,#6d0e2f 665px,#77122e 798px,#81152b 931px,#8b1929 1064px,#951d26 1197px,#9f2123 1330px,#aa261f 1463px,#b52a1c 1596px)"></div>
</div>
<svg id="deco" width="1596" height="898" viewBox="0 0 1596 898">
<path d="M 0 0 L 502 0 L 0 502 Z" fill="#ffffff" fill-opacity="0.018"/>
<path d="M 324 178 L 324 898 L 0 898 L 0 502 Z" fill="#000000" fill-opacity="0.022"/>
<path d="M 255 0 L 502 0 L 378 124 Z" fill="#000000" fill-opacity="0.025"/>
<g fill="none" stroke="#ffffff">
<path d="M 0 717 C 120 713, 230 718, 324 730" stroke="#c0207a" stroke-opacity="0.25" stroke-width="11"/>
<path d="M 0 834 L 324 834" stroke="#c0207a" stroke-opacity="0.2" stroke-width="10"/>
<path d="M 948 146 A 304 304 0 0 1 1334 116" stroke="#ff8040" stroke-opacity="0.17" stroke-width="10"/>
<path d="M 1333.5 113 L 1335 146" stroke="#ff8040" stroke-opacity="0.17" stroke-width="8"/>
<circle cx="1168.5" cy="140.3" r="19.75" stroke="#ff8040" stroke-opacity="0.17" stroke-width="9.5"/>
<path d="M 754.5 146 A 234 234 0 0 1 871 22" stroke="#ff8040" stroke-opacity="0.12" stroke-width="2.2"/>
<path d="M 950 146 A 218 218 0 0 1 1350 146" stroke="#ff8040" stroke-opacity="0.12" stroke-width="2.2"/>
<path d="M 1170 22 Q 1200 40 1224 62" stroke="#ff8040" stroke-opacity="0.12" stroke-width="2.2"/>
<path d="M 1286 67 Q 1292 110 1300 146" stroke="#ff8040" stroke-opacity="0.12" stroke-width="2.2"/>
</g>
</svg>
<div id="topbar">
<span class="t" style="left:10px">Activities</span>
<span class="t" style="left:101px;letter-spacing:-0.15px">Terminal</span>
<span class="t" style="left:768px;font-size:12.5px;letter-spacing:-0.3px">Wed 14:43</span>
</div>
<svg id="ticons" width="1596" height="22" viewBox="0 0 1596 22">
<!-- terminal app icon -->
<defs><linearGradient id="tig" x1="0" y1="0" x2="0" y2="1"><stop offset="0" stop-color="#666"/><stop offset="1" stop-color="#000"/></linearGradient></defs>
<rect x="82.5" y="5.3" width="14.2" height="11.6" rx="1.8" fill="#000" fill-opacity="0.25"/>
<rect x="83.4" y="6" width="12.7" height="10.2" rx="1.2" fill="#c6caca"/>
<rect x="85.1" y="7.3" width="9.7" height="7.6" fill="url(#tig)"/>
<path d="M 86.2 8.7 L 88.3 10.2 L 86.2 11.8 Z" fill="#b8b8b8"/>
<rect x="88.2" y="11.5" width="2.4" height="1.1" fill="#8a8a8a"/>
<!-- app menu arrow -->
<path d="M 157 9 L 165 9 L 161 13.3 Z" fill="#f0f0f0"/>
<!-- network -->
<g fill="#efefef">
<rect x="1511" y="5" width="4.5" height="4"/>
<rect x="1513" y="9" width="1" height="3"/>
<rect x="1508.5" y="11.5" width="9.5" height="1"/>
<rect x="1509" y="12" width="1" height="1.5"/>
<rect x="1517" y="12" width="1" height="1.5"/>
<rect x="1507" y="13.2" width="4.3" height="4.5"/>
<rect x="1515.3" y="13.2" width="4.5" height="4.5"/>
</g>
<!-- volume -->
<path d="M 1530 8.2 L 1532.5 8.2 L 1535.5 6 L 1535.5 15.6 L 1532.5 13.2 L 1530 13.2 Z" fill="#efefef"/>
<path d="M 1537 8.3 Q 1538.6 10.9 1537 13.5" stroke="#efefef" stroke-width="1.3" fill="none"/>
<path d="M 1539.2 6.6 Q 1541.9 10.9 1539.2 15.2" stroke="#efefef" stroke-width="1.3" fill="none"/>
<path d="M 1541.4 5.3 Q 1545.2 10.9 1541.4 16.5" stroke="#efefef" stroke-width="1.3" fill="none"/>
<!-- power -->
<path d="M 1557.6 6.6 A 5.2 5.2 0 1 0 1562.6 6.6" stroke="#efefef" stroke-width="1.7" fill="none"/>
<path d="M 1560.1 4.2 L 1560.1 9.6" stroke="#efefef" stroke-width="1.8"/>
<!-- arrow -->
<path d="M 1575.2 9 L 1583.3 9 L 1579.25 13.2 Z" fill="#efefef"/>
</svg>
<div id="shadow"></div>
<div id="win">
<div id="title"><div class="tt">admins@admins-virtual-machine: ~/Downloads/APFS</div>
<svg style="position:absolute;left:1212px;top:0" width="56" height="24" viewBox="0 0 56 24">
<defs>
<linearGradient id="bg1" x1="0" y1="0" x2="0" y2="1"><stop offset="0" stop-color="#84837e"/><stop offset="1" stop-color="#73726d"/></linearGradient>
<linearGradient id="bg2" x1="0" y1="0" x2="0" y2="1"><stop offset="0" stop-color="#f0774a"/><stop offset="1" stop-color="#e05a28"/></linearGradient>
</defs>
<circle cx="11.7" cy="11.7" r="6.7" fill="url(#bg1)" stroke="#36352f" stroke-width="1"/>
<rect x="8.2" y="11.4" width="7" height="1.4" fill="#3c3b37"/>
<circle cx="28.4" cy="11.7" r="6.7" fill="url(#bg1)" stroke="#36352f" stroke-width="1"/>
<rect x="25.6" y="9.2" width="5.6" height="5.4" fill="none" stroke="#3c3b37" stroke-width="1.1"/>
<circle cx="44.9" cy="11.7" r="6.7" fill="url(#bg2)" stroke="#36352f" stroke-width="1"/>
<path d="M 42.7 9.5 L 47.1 13.9 M 47.1 9.5 L 42.7 13.9" stroke="#3c3b37" stroke-width="1.3"/>
</svg>
</div>
<div id="menu">
<span style="left:5px">File</span><span style="left:35px">Edit</span><span style="left:67px">View</span><span style="left:105px;letter-spacing:-0.35px">Search</span><span style="left:152px">Terminal</span><span style="left:210px">Help</span>
</div>
<div id="term">
<pre><span class="g">admins@admins-virtual-machine</span>:<span class="b">~/Downloads/APFS</span>$ sudo ./install.sh
<span class="r">By installing this software you accept the terms of End User License Agreement listed in License file.</span>
<span class="r">Continue installing? [yes/no/read].</span>
y
<span class="gr">Searching and removing previously installed UFSD driver in /lib/modules/4.18.0-15-generic/</span>
<span class="y">Would you like UFSD driver to rebuild after kernel updates? [yes/no]</span>
y
<span class="gr">Setting DKMS configuration</span>
<span class="gr">Preparing to install</span>
<span class="gr">Building and installing driver to kernel 4.18.0-15-generic</span>
<span class="gr">Driver was installed to system</span>
<span class="gr">Setting driver autoload at system startup</span>
<span class="gr">Setting driver autoload at system startup</span>
<span class="gr">Installation complete!</span>
<span class="g">admins@admins-virtual-machine</span>:<span class="b">~/Downloads/APFS</span>$ cat /proc/fs/uapfs/version
APFS support included
Built_for__Retail_APFS_UFSD_HEAD_r330373_b13
$Id: ufsdvfs.c 330238 2019-03-01 12:39:59Z mamaev $
driver (UFSD_HEAD UFSD_HEAD_r330373_b13, acl, ioctl, sd2(5)) loaded at 00000000f02e2e26, sizeof(inode)=600
Kernel .config hash: original 0xd05b0e63, current can't check.
<span class="g">admins@admins-virtual-machine</span>:<span class="b">~/Downloads/APFS</span>$ lsmod | grep uapfs
<span class="br">uapfs</span>                 471040  0
jnl                    45056  1 <span class="br">uapfs</span>
<span class="g">admins@admins-virtual-machine</span>:<span class="b">~/Downloads/APFS</span>$ </pre>
<div id="sb"></div>
<div style="position:absolute;left:360px;top:345.4px;width:7.7px;height:14.9px;background:#2e3436"></div>
</div>
</div>
</body></html>
